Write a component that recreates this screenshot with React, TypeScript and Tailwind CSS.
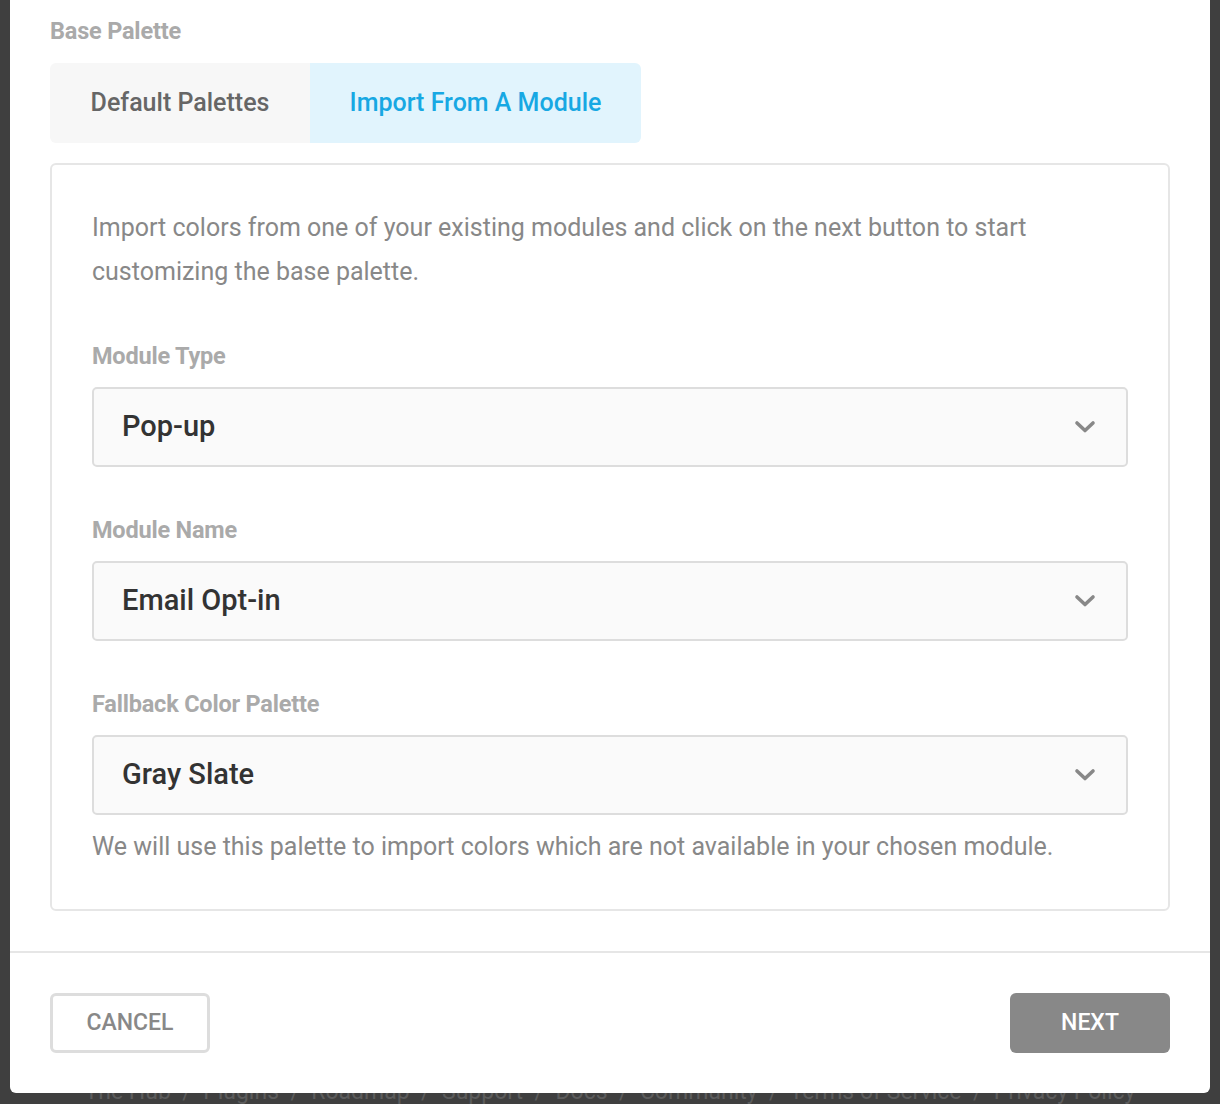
import React, { useState } from 'react';

const Chevron = () => (
  <svg width="22" height="14" viewBox="0 0 22 14" fill="none" className="shrink-0">
    <path d="M3 3 L11 10.5 L19 3" stroke="#888888" strokeWidth="3.6" strokeLinecap="round" strokeLinejoin="round" />
  </svg>
);

interface SelectFieldProps {
  label: string;
  value: string;
  help?: string;
}

const SelectField: React.FC<SelectFieldProps> = ({ label, value, help }) => (
  <div className="flex flex-col">
    <label className="text-[23.5px] font-bold text-[#aaaaaa] leading-[30px] tracking-[-0.2px]">{label}</label>
    <button
      type="button"
      className="mt-[16px] h-[80px] w-full flex items-center justify-between rounded-[5px] border-2 border-[#dddddd] bg-[#fafafa] pl-[28px] pr-[30px] text-left"
    >
      <span className="text-[29px] font-medium text-[#333333]">{value}</span>
      <Chevron />
    </button>
    {help && <p className="mt-[14px] text-[25px] leading-[36px] text-[#888888]">{help}</p>}
  </div>
);

export default function App() {
  const [tab, setTab] = useState<'default' | 'import'>('import');

  return (
    <div className="relative flex h-[1104px] w-full flex-col overflow-hidden bg-[#3f3f3f] font-['Roboto',sans-serif]">
      {/* Modal */}
      <div className="relative z-10 mx-[10px] flex flex-col rounded-b-[6px] bg-white">
        <div className="px-[40px] pt-[18px] pb-[40px]">
          <h3 className="text-[23.5px] font-bold leading-[26px] text-[#aaaaaa] tracking-[-0.2px]">Base Palette</h3>

          {/* Tabs */}
          <div className="mt-[19px] flex h-[80px]">
            <button
              type="button"
              onClick={() => setTab('default')}
              className={`w-[260px] rounded-l-[6px] text-[25px] font-medium ${
                tab === 'default' ? 'bg-[#e1f4fd] text-[#17a8e3]' : 'bg-[#f7f7f7] text-[#666666]'
              }`}
            >
              Default Palettes
            </button>
            <button
              type="button"
              onClick={() => setTab('import')}
              className={`w-[331px] rounded-r-[6px] text-[25px] font-medium ${
                tab === 'import' ? 'bg-[#e1f4fd] text-[#17a8e3]' : 'bg-[#f7f7f7] text-[#666666]'
              }`}
            >
              Import From A Module
            </button>
          </div>

          {/* Panel */}
          <div className="mt-[20px] rounded-[6px] border-2 border-[#e6e6e6] px-[40px] pt-[41px] pb-[44px]">
            <p className="text-[25px] leading-[44px] text-[#888888]">
              Import colors from one of your existing modules and click on the next button to start customizing the base palette.
            </p>
            <div className="mt-[47px] flex flex-col gap-[48px]">
              <SelectField label="Module Type" value="Pop-up" />
              <SelectField label="Module Name" value="Email Opt-in" />
              <SelectField
                label="Fallback Color Palette"
                value="Gray Slate"
                help="We will use this palette to import colors which are not available in your chosen module."
              />
            </div>
          </div>
        </div>

        {/* Footer */}
        <div className="flex items-center justify-between border-t-2 border-[#e6e6e6] px-[40px] pt-[40px] pb-[40px]">
          <button
            type="button"
            className="h-[60px] w-[160px] rounded-[6px] border-[3px] border-[#dddddd] bg-white text-[23px] font-medium text-[#888888]"
          >
            CANCEL
          </button>
          <button
            type="button"
            className="h-[60px] w-[160px] rounded-[6px] bg-[#888888] text-[23px] font-medium text-white"
          >
            NEXT
          </button>
        </div>
      </div>

      {/* Page footer behind overlay */}
      <div className="relative z-0 -mt-[18px] text-center text-[23px] text-[#5c5c5c] whitespace-nowrap">
        The Hub &nbsp;/&nbsp; Plugins &nbsp;/&nbsp; Roadmap &nbsp;/&nbsp; Support &nbsp;/&nbsp; Docs &nbsp;/&nbsp; Community &nbsp;/&nbsp; Terms of Service &nbsp;/&nbsp; Privacy Policy
      </div>
    </div>
  );
}
